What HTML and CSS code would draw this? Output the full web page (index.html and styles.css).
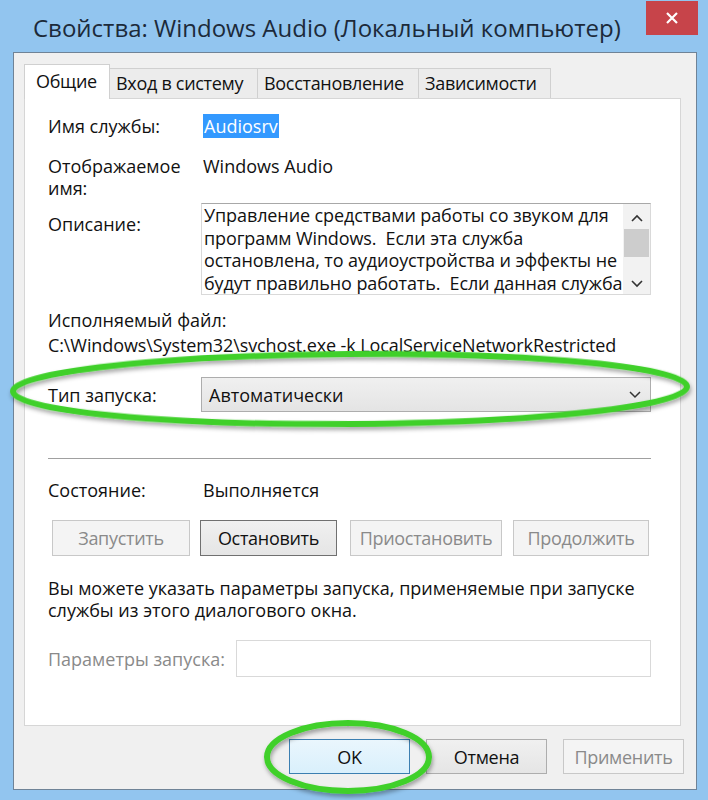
FILE: index.html
```html
<!DOCTYPE html>
<html lang="ru">
<head>
    <meta charset="UTF-8">
    <meta name="viewport" content="width=device-width, initial-scale=1.0">
    <title>Свойства: Windows Audio</title>
    <link rel="stylesheet" href="styles.css">
</head>
<body>
    <div class="window">
        <div class="titlebar">
            <span class="title">Свойства: Windows Audio (Локальный компьютер)</span>
            <div class="close">
                <svg width="14" height="14" viewBox="0 0 14 14"><path d="M2 2 L12 12 M12 2 L2 12" stroke="#fff" stroke-width="2.2"/></svg>
            </div>
        </div>

        <div class="dialog">
            <div class="tabs">
                <div class="tab active">Общие</div>
                <div class="tab">Вход в систему</div>
                <div class="tab">Восстановление</div>
                <div class="tab">Зависимости</div>
            </div>

            <div class="panel">
                <div class="field row-name">
                    <div class="label">Имя службы:</div>
                    <div class="value"><span class="selected">Audiosrv</span></div>
                </div>
                <div class="field row-display">
                    <div class="label">Отображаемое<br>имя:</div>
                    <div class="value">Windows Audio</div>
                </div>
                <div class="field row-desc">
                    <div class="label label-desc">Описание:</div>
                    <div class="desc-box">
                        <div class="desc-text">Управление средствами работы со звуком для<br>программ Windows.&nbsp; Если эта служба<br>остановлена, то аудиоустройства и эффекты не<br>будут правильно работать.&nbsp; Если данная служба</div>
                        <div class="scrollbar">
                            <svg class="arrow" width="12" height="8" viewBox="0 0 12 8"><path d="M1 7 L6 2 L11 7" fill="none" stroke="#333" stroke-width="1.6"/></svg>
                            <div class="thumb"></div>
                            <div class="track"></div>
                            <svg class="arrow" width="12" height="8" viewBox="0 0 12 8"><path d="M1 1 L6 6 L11 1" fill="none" stroke="#333" stroke-width="1.6"/></svg>
                        </div>
                    </div>
                </div>
                <div class="exe-label">Исполняемый файл:</div>
                <div class="exe-path">C:\Windows\System32\svchost.exe -k LocalServiceNetworkRestricted</div>
                <div class="field row-start">
                    <div class="label">Тип запуска:</div>
                    <div class="combo">
                        <span>Автоматически</span>
                        <svg width="12" height="8" viewBox="0 0 12 8"><path d="M1 1 L6 6 L11 1" fill="none" stroke="#333" stroke-width="1.5"/></svg>
                    </div>
                </div>

                <div class="separator"></div>

                <div class="field row-state">
                    <div class="label">Состояние:</div>
                    <div class="value">Выполняется</div>
                </div>
                <div class="service-buttons">
                    <div class="btn disabled w-start">Запустить</div>
                    <div class="btn w-stop">Остановить</div>
                    <div class="btn disabled w-pause">Приостановить</div>
                    <div class="btn disabled w-resume">Продолжить</div>
                </div>
                <p class="hint">Вы можете указать параметры запуска, применяемые при запуске<br>службы из этого диалогового окна.</p>
                <div class="params">
                    <div class="params-label">Параметры запуска:</div>
                    <div class="params-input"></div>
                </div>
            </div>

            <div class="footer">
                <div class="btn btn-ok">OK</div>
                <div class="btn">Отмена</div>
                <div class="btn disabled">Применить</div>
            </div>
        </div>

        <!-- green marker circles drawn over the screenshot -->
        <svg class="marks" width="708" height="800" viewBox="0 0 708 800">
            <defs>
                <filter id="shade" x="-10%" y="-30%" width="120%" height="160%">
                    <feDropShadow dx="1" dy="3" stdDeviation="2" flood-color="#000" flood-opacity="0.35"/>
                </filter>
            </defs>
            <ellipse cx="350" cy="389" rx="337" ry="35" fill="none" stroke="#3fd02c" stroke-width="6" filter="url(#shade)" transform="rotate(-0.4 350 389)"/>
            <ellipse cx="348" cy="757" rx="81" ry="34" fill="none" stroke="#3fd02c" stroke-width="6" filter="url(#shade)"/>
        </svg>
    </div>
</body>
</html>
```

FILE: styles.css
```css
* {
    box-sizing: border-box;
}
body {
    margin: 0;
    font-family: "Open Sans", "Noto Sans", sans-serif;
    font-size: 18px;
    color: #111;
}
.window {
    position: relative;
    width: 708px;
    height: 800px;
    background-color: #92c5ef;
    padding: 0 11px 10px 13px;
    display: flex;
    flex-direction: column;
    overflow: hidden;
}
.titlebar {
    height: 52px;
    display: flex;
    justify-content: space-between;
    align-items: flex-start;
}
.title {
    margin: 12px 0 0 20px;
    font-size: 24px;
    line-height: 32px;
    color: #1c2a3a;
}
.close {
    width: 52px;
    height: 34px;
    margin-top: 1px;
    margin-right: -1px;
    background-color: #c7444a;
    display: flex;
    align-items: center;
    justify-content: center;
}
.dialog {
    flex: 1;
    background-color: #f0f0f0;
    border: 1px solid #6f8397;
    padding: 11px 15px 0 10px;
    display: flex;
    flex-direction: column;
}
.tabs {
    display: flex;
    align-items: flex-end;
    height: 34px;
}
.tab {
    height: 30px;
    padding: 0 6px;
    line-height: 28px;
    border: 1px solid #d0d0d0;
    border-bottom: none;
    margin-left: -1px;
    background-color: #ececec;
    letter-spacing: -0.3px;
}
.tab:nth-child(2) { width: 149px; }
.tab:nth-child(3) { width: 162px; }
.tab:nth-child(4) { width: 133px; }
.tab.active {
    width: 86px;
    height: 35px;
    margin-left: 0;
    margin-bottom: -1px;
    padding: 0 11px;
    line-height: 32px;
    background-color: #fff;
    position: relative;
    z-index: 1;
}
.panel {
    height: 628px;
    background-color: #fff;
    border: 1px solid #d6d6d6;
    padding: 16px 29px 0 23px;
}
.field {
    display: grid;
    grid-template-columns: 153px 1fr;
    line-height: 22px;
}
.value {
    padding-left: 2px;
}
.selected {
    background-color: #3399ff;
    color: #fff;
    padding: 0 1px;
}
.row-display {
    margin-top: 18px;
}
.row-desc {
    margin-top: 4px;
}
.label-desc {
    padding-top: 10px;
}
.desc-box {
    height: 92px;
    border: 1px solid #d9d9d9;
    border-top-color: #a8a8a8;
    display: flex;
    overflow: hidden;
}
.desc-text {
    flex: 1;
    padding: 0 2px;
    line-height: 22.5px;
    white-space: nowrap;
    overflow: hidden;
    letter-spacing: -0.1px;
}
.scrollbar {
    width: 27px;
    background-color: #f2f2f2;
    display: flex;
    flex-direction: column;
    align-items: center;
    padding: 10px 0 6px;
}
.thumb {
    width: 25px;
    height: 28px;
    background-color: #cdcdcd;
    margin-top: 7px;
}
.track {
    flex: 1;
}
.exe-label {
    margin-top: 14px;
    line-height: 22px;
}
.exe-path {
    margin-top: 3px;
    line-height: 22px;
    letter-spacing: -0.1px;
}
.row-start {
    margin-top: 21px;
    align-items: center;
}
.combo {
    height: 35px;
    border: 1px solid #adadad;
    background: linear-gradient(#f0f0f0, #e4e4e4);
    display: flex;
    align-items: center;
    justify-content: space-between;
    padding: 0 9px 0 7px;
}
.separator {
    margin-top: 46px;
    height: 1px;
    background-color: #a0a0a0;
}
.row-state {
    margin-top: 20px;
}
.service-buttons {
    display: flex;
    margin: 19px 0 0 4px;
}
.btn {
    height: 36px;
    border: 1px solid #adadad;
    background: linear-gradient(#f0f0f0, #e5e5e5);
    display: flex;
    align-items: center;
    justify-content: center;
    letter-spacing: -0.3px;
}
.btn.disabled {
    border-color: #c8c8c8;
    background: #f4f4f4;
    color: #8a8a8a;
}
.w-start { width: 138px; }
.w-stop { width: 137px; margin-left: 10px; border-color: #707070; }
.w-pause { width: 152px; margin-left: 13px; }
.w-resume { width: 136px; margin-left: 11px; }
.hint {
    margin: 21px 0 0;
    line-height: 22px;
}
.params {
    margin-top: 19px;
    display: flex;
    align-items: center;
}
.params-label {
    width: 188px;
    color: #8a8a8a;
}
.params-input {
    flex: 1;
    height: 37px;
    border: 1px solid #d9d9d9;
}
.footer {
    display: flex;
    justify-content: flex-end;
    margin-top: 13px;
    margin-right: -3px;
}
.footer .btn {
    width: 121px;
    height: 35px;
    margin-left: 16px;
}
.footer .btn-ok {
    border-color: #3c7fb1;
    background: linear-gradient(#eaf6fd, #d9f0fc);
}
.marks {
    position: absolute;
    left: 0;
    top: 0;
    pointer-events: none;
}
```
